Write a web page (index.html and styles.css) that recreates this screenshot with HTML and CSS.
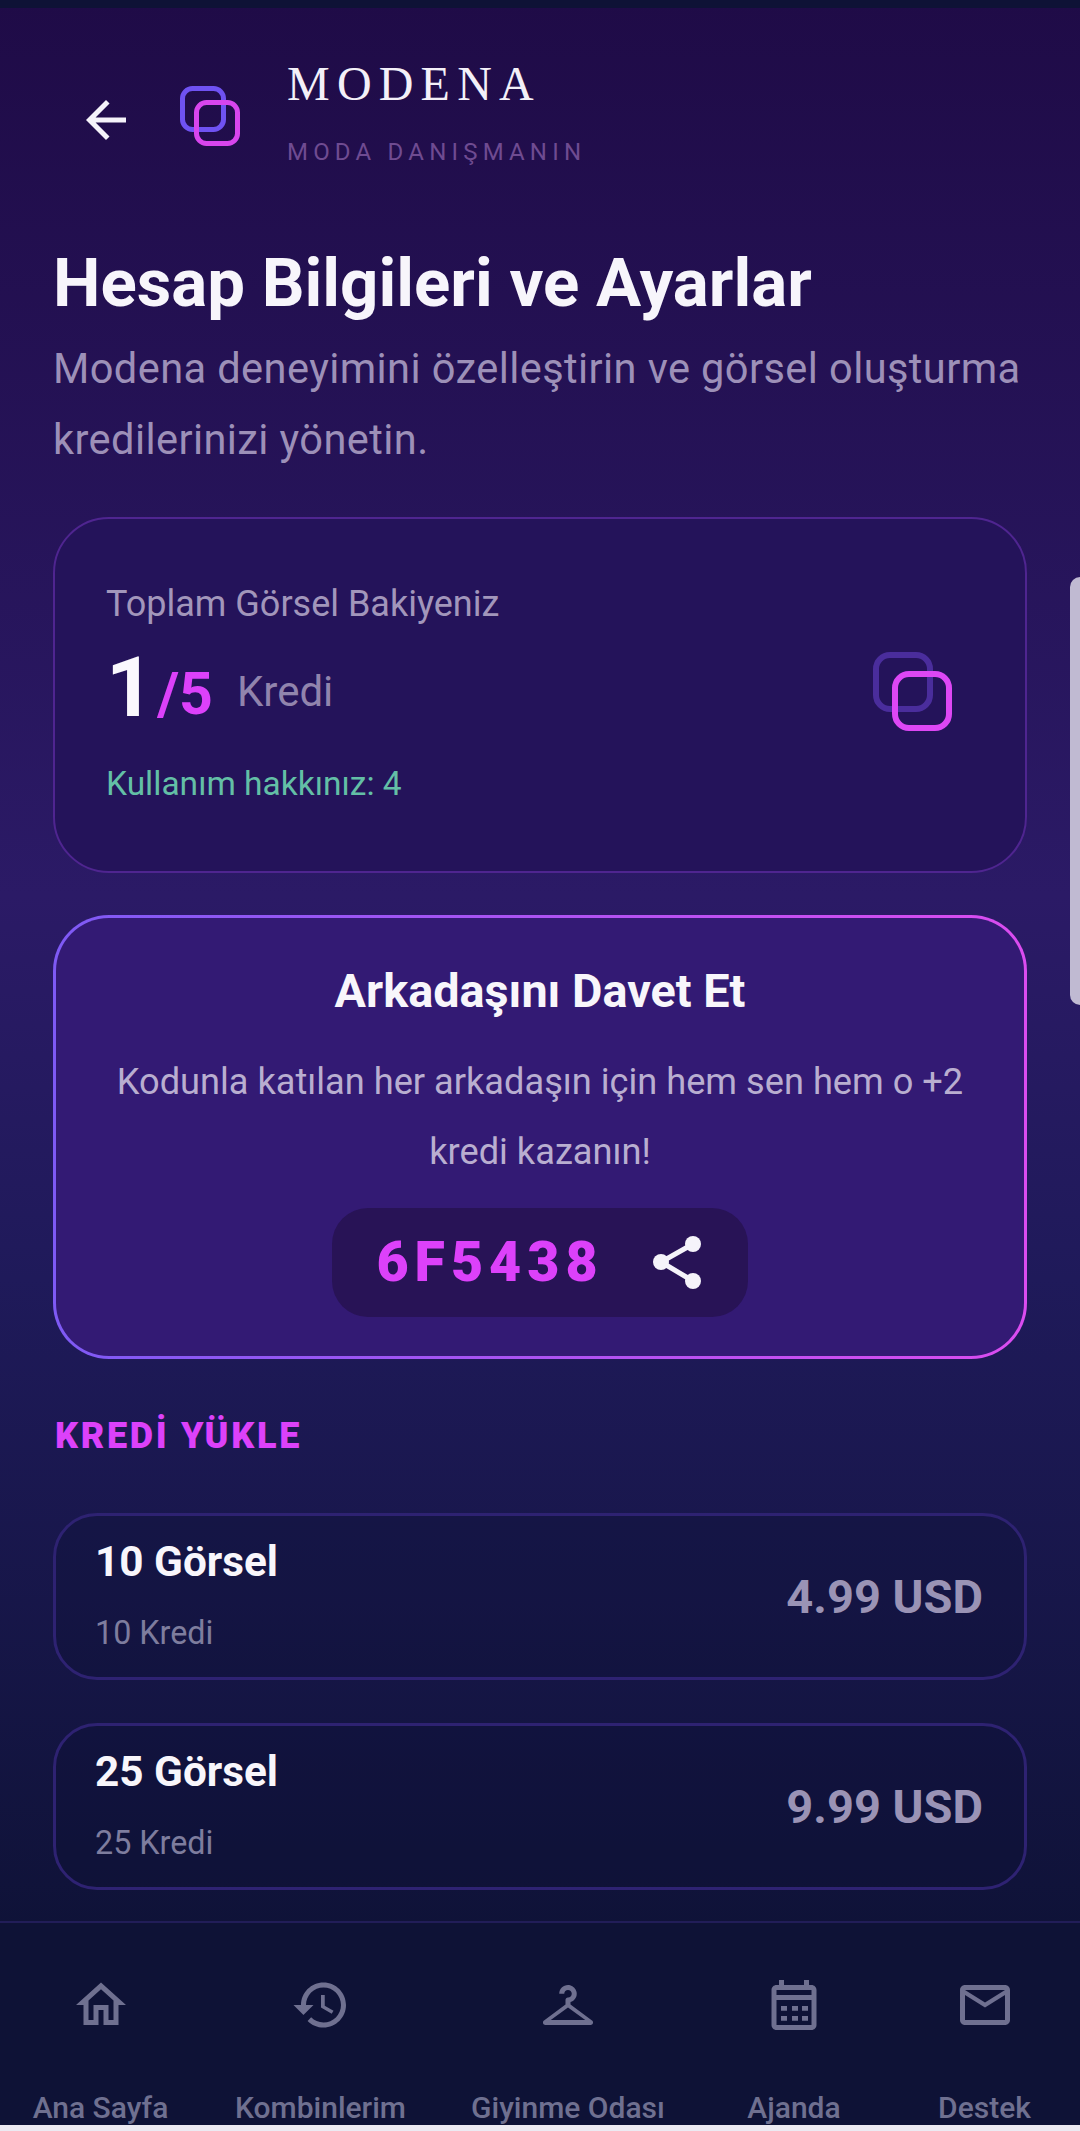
FILE: index.html
```html
<!DOCTYPE html>
<html lang="tr">
<head>
<meta charset="utf-8">
<title>Modena</title>
<link rel="stylesheet" href="styles.css">
</head>
<body>
<div class="screen">
  <div class="statusbar"></div>
  <header class="topbar">
    <svg class="back" viewBox="0 0 24 24"><path d="M20 11H7.83l5.59-5.59L12 4l-8 8 8 8 1.41-1.41L7.83 13H20v-2z"/></svg>
    <svg class="logo" viewBox="0 0 60 60"><rect x="2.5" y="2.5" width="41" height="41" rx="10" class="logo-a"/><rect x="16.5" y="16.5" width="41" height="41" rx="10" class="logo-b"/></svg>
    <div class="brand">
      <div class="brand-name">MODENA</div>
      <div class="brand-sub">MODA DANIŞMANIN</div>
    </div>
  </header>
  <main class="content">
    <h1 class="title">Hesap Bilgileri ve Ayarlar</h1>
    <p class="lead">Modena deneyimini özelleştirin ve görsel oluşturma kredilerinizi yönetin.</p>

    <section class="balance">
      <div class="balance-info">
        <div class="balance-label">Toplam Görsel Bakiyeniz</div>
        <div class="balance-row"><span class="num">1</span><span class="den">/5</span><span class="unit">Kredi</span></div>
        <div class="balance-use">Kullanım hakkınız: 4</div>
      </div>
      <svg class="balance-icon" viewBox="0 0 79 79"><rect x="3" y="3" width="54" height="54" rx="14" class="bi-a"/><rect x="22" y="22" width="54" height="54" rx="14" class="bi-b"/></svg>
    </section>

    <section class="invite">
      <h2 class="invite-title">Arkadaşını Davet Et</h2>
      <p class="invite-text">Kodunla katılan her arkadaşın için hem sen hem o +2 kredi kazanın!</p>
      <div class="code">
        <span class="code-text">6F5438</span>
        <svg class="share" viewBox="0 0 48 53"><path d="M40 8 8 26 40 45"/><circle cx="40" cy="8" r="8"/><circle cx="8" cy="26" r="8"/><circle cx="40" cy="45" r="8"/></svg>
      </div>
    </section>

    <h3 class="section">KREDİ YÜKLE</h3>

    <div class="pack">
      <div class="pack-info"><div class="pack-name">10 Görsel</div><div class="pack-sub">10 Kredi</div></div>
      <div class="pack-price">4.99 USD</div>
    </div>
    <div class="pack">
      <div class="pack-info"><div class="pack-name">25 Görsel</div><div class="pack-sub">25 Kredi</div></div>
      <div class="pack-price">9.99 USD</div>
    </div>
  </main>
  <nav class="nav">
    <div class="nav-item"><svg viewBox="0 0 24 24"><path d="M12 5.69l5 4.5V18h-2v-6H9v6H7v-7.81l5-4.5M12 3L2 12h3v8h6v-6h2v6h6v-8h3L12 3z"/></svg><span>Ana Sayfa</span></div>
    <div class="nav-item"><svg viewBox="0 0 24 24"><path d="M13 3c-4.97 0-9 4.03-9 9H1l3.89 3.89.07.14L9 12H6c0-3.87 3.13-7 7-7s7 3.13 7 7-3.13 7-7 7c-1.93 0-3.68-.79-4.94-2.06l-1.42 1.42C8.27 19.99 10.51 21 13 21c4.97 0 9-4.03 9-9s-4.03-9-9-9zm-1 5v5l4.28 2.54.72-1.21-3.5-2.08V8H12z"/></svg><span>Kombinlerim</span></div>
    <div class="nav-item"><svg viewBox="0 0 24 24"><path d="M21.6 18.2 13 11.75v-.91c1.65-.49 2.8-2.17 2.43-4.05-.26-1.31-1.3-2.4-2.61-2.7C10.54 3.57 8.5 5.3 8.5 7.5h2c0-.83.67-1.5 1.5-1.5s1.5.67 1.5 1.5c0 .84-.69 1.52-1.53 1.5-.54-.01-.97.45-.97.99v1.76L2.4 18.2c-.78.57-.39 1.8.58 1.8h18.04c.97 0 1.36-1.23.58-1.8zM5.1 18l6.9-5 6.9 5H5.1z"/></svg><span>Giyinme Odası</span></div>
    <div class="nav-item"><svg viewBox="0 0 24 24"><path d="M19 4h-1V2h-2v2H8V2H6v2H5c-1.11 0-1.99.9-1.99 2L3 20c0 1.1.89 2 2 2h14c1.1 0 2-.9 2-2V6c0-1.1-.9-2-2-2zm0 16H5V10h14v10zm0-12H5V6h14v2zM6.8 12.4h2.4v1.9H6.8zm4.4 0h2.4v1.9h-2.4zm4 0h2.4v1.9h-2.4zM6.8 16.4h2.4v1.9H6.8zm4.4 0h2.4v1.9h-2.4zm4 0h2.4v1.9h-2.4z"/></svg><span>Ajanda</span></div>
    <div class="nav-item"><svg viewBox="0 0 24 24"><path d="M20 4H4c-1.1 0-1.99.9-1.99 2L2 18c0 1.1.9 2 2 2h16c1.1 0 2-.9 2-2V6c0-1.1-.9-2-2-2zm0 14H4V8l8 5 8-5v10zm-8-7L4 6h16l-8 5z"/></svg><span>Destek</span></div>
  </nav>
  <div class="edge-strip"></div>
  <div class="side-handle"></div>
</div>
</body>
</html>
```
FILE: styles.css
```css
* { box-sizing: border-box; }
html, body { margin: 0; padding: 0; }
body { width: 1080px; height: 2131px; overflow: hidden; font-family: Roboto, sans-serif; background: #eceaf2; }
.screen {
  position: relative;
  width: 1080px;
  height: 2131px;
  display: flex;
  flex-direction: column;
  overflow: hidden;
  background: linear-gradient(180deg, #1f0b47 0%, #2b1a66 42%, #1f1a5a 60%, #0e1236 92%);
}
.statusbar { height: 8px; flex: none; background: #0e1236; }

.topbar { flex: none; display: flex; align-items: center; height: 224px; padding-left: 76px; }
.back { width: 60px; height: 60px; fill: #f5f3fa; margin-right: 44px; flex: none; }
.logo { width: 60px; height: 60px; margin: 0 47px 8px 0; fill: none; stroke-width: 5; flex: none; }
.logo-a { stroke: #6f52f2; }
.logo-b { stroke: #d845ee; }
.brand { margin-bottom: 16px; }
.brand-name { font-family: "Liberation Serif", serif; font-size: 48px; line-height: 50px; letter-spacing: 7.2px; color: #f3f0f8; }
.brand-sub { margin-top: 29px; font-size: 24px; line-height: 28px; letter-spacing: 5.2px; color: #6f4b91; }

.content { flex: 1; min-height: 0; padding: 0 53px; overflow: hidden; }
.title { margin: 12px 0 0; font-size: 67.2px; line-height: 78px; font-weight: 700; color: #f7f5fb; white-space: nowrap; }
.lead { margin: 11px 0 0; font-size: 41.6px; line-height: 71px; color: #9d90b8; letter-spacing: 0.4px; }

.balance {
  margin-top: 42px;
  height: 356px;
  padding: 64px 73px 0 51px;
  display: flex;
  align-items: flex-start;
  justify-content: space-between;
  border: 2px solid #4f2590;
  border-radius: 56px;
  background: #24135a;
}
.balance-label { font-size: 36px; line-height: 42px; color: #a296bb; }
.balance-row { display: flex; align-items: center; margin-top: 21px; height: 84px; }
.num { font-size: 84px; line-height: 84px; font-weight: 700; color: #faf8fd; }
.den { margin: 11px 0 0 3px; font-size: 59px; line-height: 60px; font-weight: 700; color: #dc41fa; }
.unit { margin: 7px 0 0 24px; font-size: 42px; line-height: 50px; color: #9184ad; }
.balance-use { margin-top: 34px; font-size: 33.5px; line-height: 40px; color: #63bfa6; }
.balance-icon { width: 79px; height: 79px; fill: none; margin-top: 69px; flex: none; }
.bi-a { stroke: #4a2d9c; stroke-width: 6; }
.bi-b { stroke: #dd47f5; stroke-width: 6; }

.invite {
  margin-top: 42px;
  height: 444px;
  padding: 47px 53px 0;
  display: flex;
  flex-direction: column;
  align-items: center;
  border: 3px solid transparent;
  border-radius: 56px;
  background:
    linear-gradient(#331a74, #331a74) padding-box,
    linear-gradient(90deg, #7e5af5, #db4cf0) border-box;
  text-align: center;
}
.invite-title { margin: 0; font-size: 46.8px; line-height: 52px; font-weight: 700; color: #f8f6fb; }
.invite-text { margin: 30px 0 0; font-size: 36.2px; line-height: 70px; color: #b9aed0; }
.code {
  display: flex;
  align-items: center;
  gap: 49px;
  margin-top: 21px;
  height: 109px;
  padding: 0 47px 0 44px;
  border-radius: 36px;
  background: #281356;
}
.code-text { font-size: 55.5px; font-weight: 900; letter-spacing: 6px; color: #dc41fa; }
.share { width: 48px; height: 53px; fill: #f5f3fa; flex: none; }
.share path { fill: none; stroke: #f5f3fa; stroke-width: 5; }

.section { margin: 57px 0 0 2px; font-size: 36px; line-height: 40px; font-weight: 900; letter-spacing: 2.7px; color: #dc41fa; }
.pack {
  margin-top: 43px;
  height: 167px;
  padding: 0 41px 0 39px;
  display: flex;
  align-items: center;
  justify-content: space-between;
  border: 3px solid #2e2272;
  border-radius: 44px;
  background: rgba(14, 18, 54, 0.3);
}
.section + .pack { margin-top: 57px; }
.pack-info { margin-bottom: 3px; }
.pack-name { font-size: 42.3px; line-height: 48px; font-weight: 700; color: #f8f6fb; }
.pack-sub { margin-top: 27px; font-size: 32.3px; line-height: 40px; color: #7e7d9e; }
.pack-price { font-size: 47px; font-weight: 700; color: #9a93b5; }

.nav {
  flex: none;
  height: 204px;
  display: grid;
  grid-template-columns: 201px 239px 256px 196px 185px;
  padding-top: 52px;
  overflow: hidden;
  border-top: 2px solid #211d58;
  background: #0e1236;
}
.nav-item { display: flex; flex-direction: column; align-items: center; color: #6f7090; }
.nav-item svg { width: 60px; height: 60px; fill: #6f7090; flex: none; }
.nav-item span { margin-top: 55px; font-size: 30px; line-height: 36px; font-weight: 500; white-space: nowrap; }
.edge-strip { flex: none; height: 6px; background: #eceaf2; }
.side-handle {
  position: absolute;
  top: 577px;
  right: 0;
  width: 10px;
  height: 428px;
  border-radius: 10px 0 0 10px;
  background: #c0bad2;
}
```
